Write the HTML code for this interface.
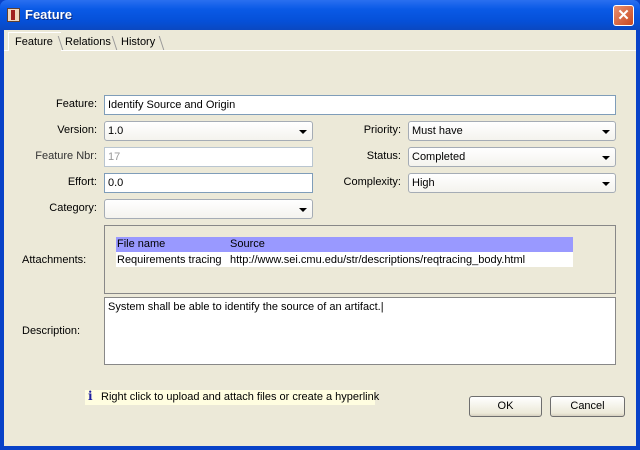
<!DOCTYPE html>
<html><head><style>
*{margin:0;padding:0;box-sizing:border-box}
body{width:640px;height:450px;overflow:hidden;background:#0842c8;font-family:"Liberation Sans",Arial,sans-serif;font-size:11px;color:#000;position:relative}
.a{position:absolute}
#title{left:0;top:0;width:640px;height:30px;background:linear-gradient(#2a6ff0,#0a5ae6 30%,#0550d8 70%,#0a48c0);border-radius:7px 7px 0 0}
#body{left:4px;top:30px;width:632px;height:416px;background:#ece9d8}
.lbl{position:absolute;text-align:right;width:90px;font-size:11px}
.inp{position:absolute;background:#fff;border:1px solid #7f9db9;height:20px;padding:3px 3px;font-size:11px;line-height:13px}
.cmb{position:absolute;background:#fff;border:1px solid #a5acb5;border-radius:3px;height:20px;padding:3px 3px;font-size:11px;line-height:13px;background:linear-gradient(#fff,#f4f3ee)}
.cmb:after{content:"";position:absolute;right:5px;top:8px;border-left:4px solid transparent;border-right:4px solid transparent;border-top:4px solid #000}
.btn{position:absolute;border:1px solid #6e6e6e;border-radius:3px;background:linear-gradient(#fff,#ece9d8 85%,#d6d0c0);text-align:center;line-height:19px;height:21px}
</style></head><body>
<div id="title" class="a">
 <div class="a" style="left:7px;top:8px;width:13px;height:14px;background:#f0d8c0;border:1px solid #604030"><div style="position:absolute;left:3px;top:1px;width:4px;height:10px;background:#a02020"></div></div>
 <div class="a" style="left:25px;top:7px;color:#fff;font-weight:bold;font-size:13px;text-shadow:1px 1px #0a2a80">Feature</div>
 <div class="a" style="left:613px;top:5px;width:21px;height:21px;border:1px solid #fff;border-radius:3px;background:linear-gradient(135deg,#e89070,#c84820);color:#fff;font-size:15px;font-weight:bold;text-align:center;line-height:19px">✕</div>
</div>
<div id="body" class="a"></div>
<div class="a" style="left:4px;top:50px;width:632px;height:1px;background:#fff"></div>
<div class="a" style="left:8px;top:32px;width:53px;height:19px;background:#ece9d8;border-top:1px solid #fff;border-left:1px solid #fff"></div>
<div class="a" style="left:60px;top:36px;width:1px;height:14px;background:#999;transform:skewX(18deg)"></div>
<div class="a" style="left:15px;top:36px">Feature</div>
<div class="a" style="left:65px;top:36px">Relations</div>
<div class="a" style="left:114px;top:36px;width:1px;height:14px;background:#999;transform:skewX(18deg)"></div>
<div class="a" style="left:121px;top:36px">History</div>
<div class="a" style="left:161px;top:36px;width:1px;height:14px;background:#999;transform:skewX(18deg)"></div>

<div class="lbl" style="left:7px;top:98px">Feature:</div>
<div class="inp" style="left:104px;top:95px;width:512px">Identify Source and Origin</div>
<div class="lbl" style="left:7px;top:124px">Version:</div>
<div class="cmb" style="left:104px;top:121px;width:209px">1.0</div>
<div class="lbl" style="left:7px;top:150px;color:#333">Feature Nbr:</div>
<div class="inp" style="left:104px;top:147px;width:209px;color:#999;border-color:#b9c5d0">17</div>
<div class="lbl" style="left:7px;top:176px">Effort:</div>
<div class="inp" style="left:104px;top:173px;width:209px">0.0</div>
<div class="lbl" style="left:7px;top:202px">Category:</div>
<div class="cmb" style="left:104px;top:199px;width:209px"></div>
<div class="lbl" style="left:311px;top:124px">Priority:</div>
<div class="cmb" style="left:408px;top:121px;width:208px">Must have</div>
<div class="lbl" style="left:311px;top:150px">Status:</div>
<div class="cmb" style="left:408px;top:147px;width:208px">Completed</div>
<div class="lbl" style="left:311px;top:176px">Complexity:</div>
<div class="cmb" style="left:408px;top:173px;width:208px">High</div>

<div class="a" style="left:22px;top:254px">Attachments:</div>
<div class="a" style="left:104px;top:225px;width:512px;height:69px;border:1px solid #888;background:#ece9d8"></div>
<div class="a" style="left:116px;top:237px;width:457px;height:15px;background:#9999ff"></div>
<div class="a" style="left:116px;top:252px;width:457px;height:15px;background:#fff"></div>
<div class="a" style="left:117px;top:238px">File name</div>
<div class="a" style="left:230px;top:238px">Source</div>
<div class="a" style="left:117px;top:254px">Requirements tracing</div>
<div class="a" style="left:230px;top:254px">http://www.sei.cmu.edu/str/descriptions/reqtracing_body.html</div>

<div class="a" style="left:22px;top:325px">Description:</div>
<div class="inp" style="left:104px;top:297px;width:512px;height:68px;border-color:#888">System shall be able to identify the source of an artifact.|</div>

<div class="a" style="left:85px;top:390px;width:290px;height:15px;background:#fffde0"></div>
<div class="a" style="left:88px;top:389px;color:#2020a0;font-weight:bold;font-family:'DejaVu Serif',serif;font-size:12px">i</div>
<div class="a" style="left:101px;top:391px">Right click to upload and attach files or create a hyperlink</div>

<div class="btn" style="left:469px;top:396px;width:73px">OK</div>
<div class="btn" style="left:550px;top:396px;width:75px">Cancel</div>
</body></html>
